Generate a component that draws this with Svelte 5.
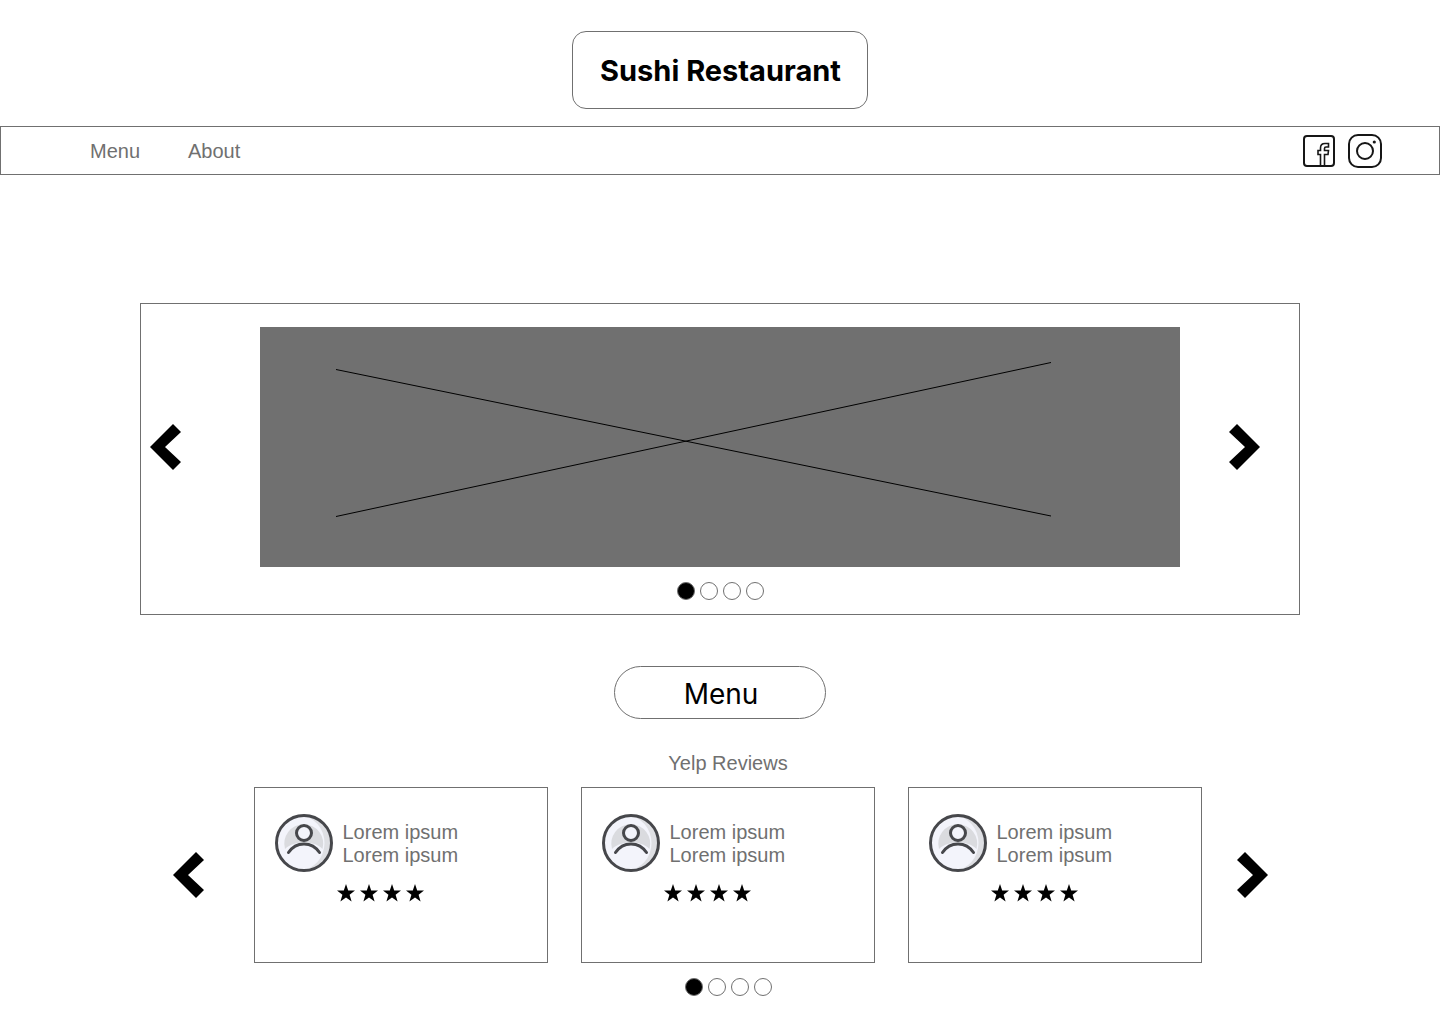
<script lang="ts">
    interface Review {
        title: string;
        text: string;
        stars: number;
    }

    const slides = [0, 1, 2, 3];
    const pages = [0, 1, 2, 3];

    const reviews: Review[] = [
        { title: 'Lorem ipsum', text: 'Lorem ipsum', stars: 4 },
        { title: 'Lorem ipsum', text: 'Lorem ipsum', stars: 4 },
        { title: 'Lorem ipsum', text: 'Lorem ipsum', stars: 4 }
    ];

    let slide = $state(0);
    let page = $state(0);

    // Wrap around at both ends
    function step(current: number, by: number, total: number): number {
        return (current + by + total) % total;
    }
</script>

{#snippet arrow(direction: string)}
    <svg class="arrow-icon" viewBox="0 0 31 46" aria-hidden="true">
        {#if direction === 'left'}
            <path d="M23 0 31 8 15 23 31 38 23 46 0 23Z" />
        {:else}
            <path d="M8 0 0 8 16 23 0 38 8 46 31 23Z" />
        {/if}
    </svg>
{/snippet}

<header>
    <h1 class="logo">Sushi Restaurant</h1>
    <nav>
        <div class="links">
            <a href="#menu">Menu</a>
            <a href="#about">About</a>
        </div>
        <div class="social">
            <a href="#facebook" aria-label="Facebook">
                <svg width="34" height="34" viewBox="0 0 34 34">
                    <rect x="2" y="2" width="30" height="30" rx="3" />
                    <path class="letter" d="M18.500 32V20.500H16V16.500h2.500V14C18.500 11 20 9.500 23 9.500H26.500V13H24C23 13 22.500 13.500 22.500 14.500V16.500h4L26 20.500H22.500V32" />
                </svg>
            </a>
            <a href="#instagram" aria-label="Instagram">
                <svg width="34" height="34" viewBox="0 0 34 34">
                    <rect x="1" y="1" width="32" height="32" rx="9" />
                    <circle cx="17" cy="17" r="8" />
                    <circle class="dot-fill" cx="26.300" cy="8" r="1.600" />
                </svg>
            </a>
        </div>
    </nav>
</header>

<main>
    <section class="carousel" aria-label="Gallery">
        <div class="stage">
            <button class="arrow prev" aria-label="Previous slide" onclick={() => (slide = step(slide, -1, slides.length))}>
                {@render arrow('left')}
            </button>
            <svg class="placeholder" viewBox="0 0 920 240" preserveAspectRatio="none" aria-hidden="true">
                <path d="M76 42.500 791 189M76 189.500 791 35.500" />
            </svg>
            <button class="arrow next" aria-label="Next slide" onclick={() => (slide = step(slide, 1, slides.length))}>
                {@render arrow('right')}
            </button>
        </div>
        <div class="dots">
            {#each slides as i}
                <button class="dot" class:active={i === slide} aria-label={`Slide ${i + 1}`} onclick={() => (slide = i)}></button>
            {/each}
        </div>
    </section>

    <a class="menu-button" id="menu" href="#menu">Menu</a>

    <section class="reviews">
        <h2>Yelp Reviews</h2>
        <div class="review-row">
            <button class="arrow" aria-label="Previous reviews" onclick={() => (page = step(page, -1, pages.length))}>
                {@render arrow('left')}
            </button>
            <div class="cards">
                {#each reviews as review}
                    <article class="card">
                        <div class="author">
                            <svg class="avatar" viewBox="0 0 58 58" aria-hidden="true">
                                <circle cx="29" cy="29" r="28" fill="#dedfe3" />
                                <ellipse cx="25.500" cy="29" rx="24" ry="27" fill="#f3f4fb" />
                                <path d="M10 35a19.500 19.500 0 1 1 37.500 0C43 30 36 28.500 29 28.500S15 30 10 35Z" fill="#dadbdf" />
                                <g stroke="#46474b" stroke-width="3" stroke-linecap="round">
                                    <circle cx="29" cy="29" r="27.500" fill="none" />
                                    <circle cx="29" cy="19" r="7.500" fill="#f3f4fb" />
                                    <path d="M13.500 38.500c7.500-11.500 23.500-11.500 31 0" fill="none" />
                                </g>
                            </svg>
                            <p>{review.title}<br />{review.text}</p>
                        </div>
                        <div class="stars" role="img" aria-label={`${review.stars} stars`}>
                            {#each { length: review.stars } as _}
                                <svg width="18" height="18" viewBox="0 0 18 18">
                                    <path d="M9 0 11.200 6.500H18L12.600 10.700 14.600 17.500 9 13.500 3.400 17.500 5.400 10.700 0 6.500H6.800Z" />
                                </svg>
                            {/each}
                        </div>
                    </article>
                {/each}
            </div>
            <button class="arrow" aria-label="Next reviews" onclick={() => (page = step(page, 1, pages.length))}>
                {@render arrow('right')}
            </button>
        </div>
        <div class="dots">
            {#each pages as i}
                <button class="dot" class:active={i === page} aria-label={`Reviews page ${i + 1}`} onclick={() => (page = i)}></button>
            {/each}
        </div>
    </section>
</main>

<style>
    :global(body) {
        margin: 0;
        background: #fff;
        color: #707070;
        font-family: 'Liberation Sans', Arial, sans-serif;
        font-size: 20px;
        line-height: 23px;
    }

    header {
        display: flex;
        flex-direction: column;
        align-items: center;
        gap: 17px;
        padding-top: 31px;
    }

    .logo {
        box-sizing: border-box;
        margin: 0;
        padding: 21px 26px 19px 27px;
        border: 1px solid #707070;
        border-radius: 14px;
        color: #000;
        font-family: Inter, sans-serif;
        font-size: 29px;
        font-weight: 700;
        line-height: 36px;
    }

    nav {
        box-sizing: border-box;
        display: flex;
        align-items: center;
        justify-content: space-between;
        width: 100%;
        padding: 7px 57px 6px 89px;
        border: 1px solid #707070;
    }

    .links {
        display: flex;
        gap: 48px;
    }

    .links a {
        color: inherit;
        text-decoration: none;
    }

    .social {
        display: flex;
        gap: 12px;
    }

    .social a {
        display: flex;
    }

    .social svg {
        fill: none;
        stroke: #161616;
        stroke-width: 2;
    }

    .social .letter {
        stroke-width: 1.6;
    }

    .social .dot-fill {
        fill: #161616;
        stroke: none;
    }

    main {
        display: flex;
        flex-direction: column;
        align-items: center;
        padding: 128px 140px 27px;
    }

    button {
        padding: 0;
        border: 0;
        background: none;
        cursor: pointer;
    }

    .arrow {
        display: flex;
    }

    .arrow-icon {
        width: 31px;
        height: 46px;
    }

    .carousel {
        box-sizing: border-box;
        width: 100%;
        padding: 23px 0 14px;
        border: 1px solid #707070;
    }

    .stage {
        display: grid;
        grid-template-columns: 119px 1fr 119px;
        align-items: center;
    }

    .prev {
        padding-left: 9px;
    }

    .next {
        padding-left: 49px;
    }

    .placeholder {
        display: block;
        width: 100%;
        height: 240px;
        background: #707070;
    }

    .placeholder path {
        fill: none;
        stroke: #000;
        vector-effect: non-scaling-stroke;
    }

    .dots {
        display: flex;
        justify-content: center;
        gap: 5px;
        margin-top: 15px;
    }

    .dot {
        box-sizing: border-box;
        width: 18px;
        height: 18px;
        border: 1px solid #707070;
        border-radius: 50%;
        background: #fff;
    }

    .dot.active {
        background: #000;
    }

    .menu-button {
        box-sizing: border-box;
        width: 212px;
        margin-top: 51px;
        padding: 9px 0 6px 2px;
        border: 1px solid #707070;
        border-radius: 27px;
        color: #000;
        font-family: Inter, sans-serif;
        font-size: 28px;
        line-height: 36px;
        text-align: center;
        text-decoration: none;
    }

    .reviews {
        margin-top: 33px;
    }

    .reviews h2 {
        margin: 0 0 12px;
        padding-left: 16px;
        font-size: 20px;
        font-weight: 400;
        text-align: center;
    }

    .review-row {
        display: flex;
        align-items: center;
    }

    .cards {
        display: flex;
        gap: 33px;
        margin: 0 35px 0 50px;
    }

    .reviews .dots {
        padding-left: 16px;
    }

    .card {
        box-sizing: border-box;
        width: 294px;
        height: 176px;
        padding: 26px 20px;
        border: 1px solid #707070;
    }

    .author {
        display: flex;
        align-items: center;
        gap: 10px;
    }

    .avatar {
        width: 58px;
        height: 58px;
    }

    .author p {
        margin: 0;
        padding-top: 2px;
    }

    .stars {
        display: flex;
        gap: 5px;
        margin: 12px 0 0 62px;
    }
</style>
